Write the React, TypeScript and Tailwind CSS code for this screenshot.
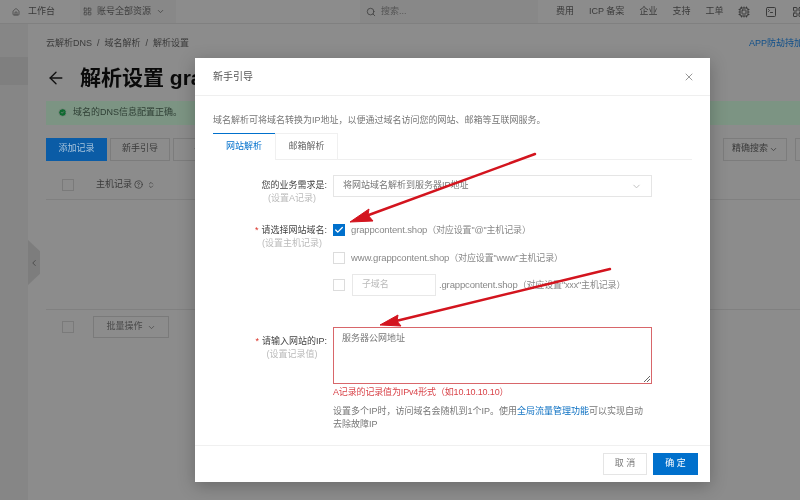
import { ArrowLeft, Check, ChevronDown, ChevronLeft, ChevronsUpDown, CircleCheck, CircleHelp, Cpu, Home, LayoutGrid, Search, SquareTerminal, X } from 'lucide-react';

const font = { fontFamily: '"Liberation Sans", "Noto Sans CJK SC", sans-serif' };
const navItems = ['费用', 'ICP 备案', '企业', '支持', '工单'];

function Box({ checked }: { checked?: boolean }) {
  return checked ? (
    <span className="flex h-[12px] w-[12px] shrink-0 items-center justify-center bg-[#0070cc]">
      <Check className="h-[10px] w-[10px] text-white" strokeWidth={3} />
    </span>
  ) : (
    <span className="block h-[12px] w-[12px] shrink-0 border border-[#dcdcdc] bg-white" />
  );
}

function Label({ text, sub, required, className }: { text: string; sub: string; required?: boolean; className?: string }) {
  return (
    <div className={`w-[114px] shrink-0 text-right leading-[13px] ${className ?? ''}`}>
      <div className="text-[#444]">
        {required && <span className="mr-[3px] text-[#d93026]">*</span>}
        {text}
      </div>
      <div className="pl-[44px] text-center text-[#bbb]">{sub}</div>
    </div>
  );
}

// page behind the dialog, already dimmed
function Background() {
  return (
    <div className="flex h-[500px] w-[800px] flex-col overflow-hidden bg-[#8c8c8c] text-[9px] text-[#333]">
      <header className="flex h-[24px] shrink-0 items-center overflow-hidden border-b border-[#808080] pl-[12px]">
        <Home className="h-[8px] w-[8px] shrink-0 text-[#3a3a3a]" />
        <span className="ml-[8px] shrink-0 whitespace-nowrap text-[#3a3a3a]">工作台</span>
        <div className="ml-[25px] flex h-[24px] w-[96px] shrink-0 items-center gap-[5px] bg-[#888888] pl-[3px] text-[#404040]">
          <LayoutGrid className="h-[9px] w-[9px]" />
          <span>账号全部资源</span>
          <ChevronDown className="h-[9px] w-[9px]" />
        </div>
        <div className="ml-[184px] flex h-[24px] w-[178px] shrink-0 items-center gap-[5px] bg-[#888888] pl-[6px] text-[#555]">
          <Search className="h-[10px] w-[10px] text-[#404040]" />
          <span>搜索...</span>
        </div>
        <nav className="ml-[18px] flex items-center gap-[15px] text-[#3a3a3a]">
          {navItems.map((n) => (
            <span key={n} className="whitespace-nowrap">{n}</span>
          ))}
          <Cpu className="h-[12px] w-[12px] shrink-0" />
          <SquareTerminal className="h-[12px] w-[12px] shrink-0" />
          <LayoutGrid className="h-[12px] w-[12px] shrink-0" />
        </nav>
      </header>
      <div className="flex flex-1">
        <aside className="relative w-[28px] shrink-0 bg-[#868686] pt-[33px]">
          <div className="h-[28px] bg-[#7f7f7f]" />
          <div className="absolute left-[28px] top-[216px] flex h-[45px] w-[12px] items-center justify-center bg-[#7d7d7d] [clip-path:polygon(0_0,100%_25%,100%_75%,0_100%)]">
            <ChevronLeft className="h-[10px] w-[10px] text-[#444]" />
          </div>
        </aside>
        <main className="min-w-0 flex-1 overflow-hidden pl-[18px]">
          <div className="flex justify-between pt-[13px] text-[#3a3a3a]">
            <span>云解析DNS &nbsp;/&nbsp; 域名解析 &nbsp;/&nbsp; 解析设置</span>
            <span className="-mr-[12px] whitespace-nowrap text-[#0f4f8a]">APP防劫持加速</span>
          </div>
          <div className="mt-[14px] flex items-center gap-[14px]">
            <ArrowLeft className="h-[20px] w-[20px] text-[#111]" strokeWidth={1.6} />
            <h1 className="w-[115px] overflow-hidden whitespace-nowrap text-[21px] font-bold leading-[26px] text-[#0a0a0a]">解析设置 gra</h1>
          </div>
          <div className="mt-[10px] flex h-[24px] items-center gap-[6px] bg-[#7c9483] pl-[12px] text-[#2f3f35]">
            <CircleCheck className="h-[9px] w-[9px] fill-[#0f6a30] text-[#8c8c8c]" />
            <span>域名的DNS信息配置正确。</span>
          </div>
          <div className="mt-[13px] flex h-[23px] items-center">
            <button className="h-[23px] w-[61px] bg-[#0b5ca6] text-[9px] text-[#a8c4dc]">添加记录</button>
            <button className="ml-[3px] h-[23px] w-[60px] border border-[#7c7c7c] text-[9px] text-[#3a3a3a]">新手引导</button>
            <button className="ml-[3px] h-[23px] w-[60px] border border-[#7c7c7c] text-[9px] text-[#3a3a3a]">导入</button>
            <button className="ml-auto flex h-[23px] w-[64px] items-center justify-center gap-[1px] border border-[#7c7c7c] text-[9px] text-[#3a3a3a]">
              精确搜索
              <ChevronDown className="h-[9px] w-[9px]" />
            </button>
            <span className="-mr-[4px] ml-[8px] block h-[23px] w-[9px] border border-r-0 border-[#7c7c7c]" />
          </div>
          <div className="mt-[10px] flex h-[29px] items-center border-b border-[#808080] pl-[16px] text-[#3a3a3a]">
            <span className="block h-[12px] w-[12px] border border-[#7a7a7a]" />
            <span className="ml-[22px]">主机记录</span>
            <CircleHelp className="ml-[2px] h-[9px] w-[9px]" />
            <ChevronsUpDown className="ml-[4px] h-[8px] w-[8px]" />
          </div>
          <div className="mt-[109px] flex h-[29px] items-center border-t border-[#808080] pl-[16px] pt-[7px]">
            <span className="block h-[12px] w-[12px] border border-[#7a7a7a]" />
            <div className="ml-[19px] flex h-[22px] w-[76px] items-center justify-center gap-[4px] border border-[#7a7a7a] text-[#4a4a4a]">
              批量操作
              <ChevronDown className="h-[9px] w-[9px]" />
            </div>
          </div>
        </main>
      </div>
    </div>
  );
}

function Modal() {
  return (
    <div className="w-[515px] bg-white text-[9px] text-[#666] shadow-[0_4px_16px_rgba(0,0,0,0.25)]">
      <div className="flex h-[38px] items-center justify-between border-b border-[#efefef] pl-[18px] pr-[15px]">
        <span className="text-[10px] text-[#555]">新手引导</span>
        <X className="h-[12px] w-[12px] text-[#777]" strokeWidth={1.5} />
      </div>
      <div className="h-[349px] px-[18px]">
        <p className="pt-[18px] leading-[12px] text-[#777]">
          域名解析可将域名转换为IP地址，以便通过域名访问您的网站、邮箱等互联网服务。
        </p>
        <div className="mt-[7px] flex h-[27px] border-b border-[#efefef]">
          <div className="flex h-[27px] w-[62px] items-center justify-center border-t border-t-[#0070cc] bg-white text-[#0070cc]">网站解析</div>
          <div className="flex h-[27px] w-[63px] items-center justify-center border border-b-0 border-[#f0f0f0] text-[#666]">邮箱解析</div>
        </div>
        <div className="mt-[15px] flex items-start gap-[6px]">
          <Label text="您的业务需求是:" sub="(设置A记录)" className="pt-[4px]" />
          <div className="flex h-[22px] w-[319px] items-center justify-between border border-[#e5e5e5] pl-[9px] pr-[9px]">
            <span className="text-[#777]">将网站域名解析到服务器IP地址</span>
            <ChevronDown className="h-[11px] w-[11px] text-[#bbb]" />
          </div>
        </div>
        <div className="mt-[19px] flex items-start gap-[6px]">
          <Label text="请选择网站域名:" sub="(设置主机记录)" required />
          <div className="flex flex-col text-[#888] tracking-[-0.15px]">
            <div className="flex h-[12px] items-center gap-[6px]">
              <Box checked />
              <span><span className="text-[9.5px]">grappcontent.shop</span>（对应设置"@"主机记录）</span>
            </div>
            <div className="mt-[16px] flex h-[12px] items-center gap-[6px]">
              <Box />
              <span><span className="text-[9.5px]">www.grappcontent.shop</span>（对应设置"www"主机记录）</span>
            </div>
            <div className="mt-[10px] flex h-[22px] items-center gap-[7px]">
              <Box />
              <span className="flex h-[22px] w-[84px] items-center border border-[#e8e8e8] pl-[9px] text-[#bbb]">子域名</span>
              <span className="-ml-[4px]"><span className="text-[9.5px]">.grappcontent.shop</span>（对应设置"xxx"主机记录）</span>
            </div>
          </div>
        </div>
        <div className="mt-[31px] flex items-start gap-[6px]">
          <Label text="请输入网站的IP:" sub="(设置记录值)" required className="pt-[8px]" />
          <div className="w-[319px]">
            <div className="relative h-[57px] border border-[#d8666a] pl-[8px] pt-[4px] text-[#777]">
              服务器公网地址
              <svg className="absolute bottom-[1px] right-[1px] h-[7px] w-[7px] text-[#666]" viewBox="0 0 7 7" fill="none" stroke="currentColor">
                <path d="M1 7 7 1M4 7 7 4" />
              </svg>
            </div>
            <p className="mt-[2px] leading-[13px] tracking-[-0.15px] text-[#d9444a]">A记录的记录值为IPv4形式（如10.10.10.10）</p>
            <p className="mt-[6px] leading-[13px] text-[#777]">
              设置多个IP时，访问域名会随机到1个IP。使用<span className="text-[#0a6fc2]">全局流量管理功能</span>可以实现自动
              <br />
              去除故障IP
            </p>
          </div>
        </div>
      </div>
      <div className="flex h-[37px] items-center justify-end gap-[6px] border-t border-[#f0f0f0] pr-[12px]">
        <button className="h-[22px] w-[44px] border border-[#e5e5e5] text-[9px] text-[#777]">取 消</button>
        <button className="h-[22px] w-[45px] bg-[#0070cc] text-[9px] text-white">确 定</button>
      </div>
    </div>
  );
}

export default function App() {
  return (
    <div className="relative h-[500px] w-[800px] overflow-hidden blur-[0.45px]" style={font}>
      <Background />
      <div className="absolute left-[195px] top-[58px]">
        <Modal />
      </div>
      {/* red annotation arrows drawn on the screenshot */}
      <svg className="absolute inset-0 h-[500px] w-[800px]" viewBox="0 0 800 500" fill="none">
        <path d="M535 154 366 216" stroke="#d3141e" strokeWidth="2.4" strokeLinecap="round" />
        <path d="M350 222 369 209 368 215 373 221Z" fill="#d3141e" stroke="#d3141e" />
        <path d="M610 269 396 321" stroke="#d3141e" strokeWidth="2.4" strokeLinecap="round" />
        <path d="M380 325 398 315 397 321 401 326Z" fill="#d3141e" stroke="#d3141e" />
      </svg>
    </div>
  );
}
